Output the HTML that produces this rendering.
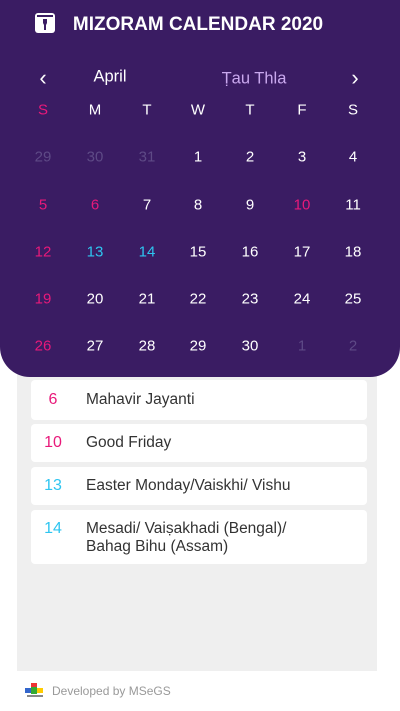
<!DOCTYPE html>
<html><head><meta charset="utf-8"><style>
*{margin:0;padding:0;box-sizing:border-box}
body{width:400px;height:711px;background:#fff;font-family:"Liberation Sans",sans-serif;position:relative;overflow:hidden}
.gray{position:absolute;left:17px;top:340px;width:360px;height:331px;background:#efefef}
.top{position:absolute;left:0;top:0;width:400px;height:377px;background:#3a1c63;border-radius:0 0 30px 30px}
.t{position:absolute;color:#fff;transform:translate(-50%,-50%);white-space:nowrap}
.c{font-size:15px}
.p{color:#e8197a}.b{color:#2ec5f0}.d{color:#5e4a86}
.card{position:absolute;left:31px;width:336px;background:#fff;border-radius:4px;font-size:15.5px;color:#333}
.card .n{position:absolute;left:22px;top:50%;transform:translate(-50%,-50%);font-size:16px}
.card .x{position:absolute;left:55px}
</style></head><body>
<div class="gray"></div>
<div class="top">
<svg style="position:absolute;left:34px;top:12px" width="22" height="22" viewBox="0 0 22 22"><rect x="1" y="1" width="20" height="20" rx="3" fill="#fff"/><rect x="3" y="3" width="16" height="2" fill="#3a1c63"/><path d="M9 7h4v4l-1 2v5h-2v-5l-1-2z" fill="#3a1c63"/></svg>
<div class="t" style="left:198px;top:25px;font-size:19px;font-weight:bold">MIZORAM CALENDAR 2020</div>
<div class="t" style="left:43px;top:78px;font-size:22px">‹</div>
<div class="t" style="left:110px;top:77px;font-size:16.5px">April</div>
<div class="t" style="left:254px;top:79px;font-size:16.5px;color:#c9a8ee">Ṭau Thla</div>
<div class="t" style="left:355px;top:78px;font-size:22px">›</div>
</div>
<div id="g"></div>
<div class="card" style="top:380px;height:40px"><span class="n p">6</span><span class="x" style="top:11px">Mahavir Jayanti</span></div>
<div class="card" style="top:424px;height:38px"><span class="n p">10</span><span class="x" style="top:10px">Good Friday</span></div>
<div class="card" style="top:467px;height:38px"><span class="n b">13</span><span class="x" style="top:10px">Easter Monday/Vaiskhi/ Vishu</span></div>
<div class="card" style="top:510px;height:54px"><span class="n b" style="top:19px">14</span><span class="x" style="top:10px;line-height:18px">Mesadi/ Vaiṣakhadi (Bengal)/<br>Bahag Bihu (Assam)</span></div>
<svg style="position:absolute;left:25px;top:683px" width="20" height="16" viewBox="0 0 20 16"><rect x="6" y="0" width="6" height="4" fill="#e33"/><rect x="0" y="5" width="6" height="5" fill="#36c"/><rect x="12" y="5" width="6" height="5" fill="#fc0"/><rect x="6" y="4" width="6" height="7" fill="#3a3"/><rect x="2" y="12" width="16" height="2" fill="#888"/></svg>
<div style="position:absolute;left:52px;top:684px;font-size:12px;color:#999">Developed by MSeGS</div>
<script>
var xs=[43,95,147,198,250,302,353],h=["S","M","T","W","T","F","S"],s="";
h.forEach(function(v,i){s+='<div class="t c'+(i==0?' p':'')+'" style="left:'+xs[i]+'px;top:110px">'+v+'</div>'});
var rows=[[29,30,31,1,2,3,4],[5,6,7,8,9,10,11],[12,13,14,15,16,17,18],[19,20,21,22,23,24,25],[26,27,28,29,30,1,2]],ys=[157,205,252,299,346];
rows.forEach(function(r,ri){r.forEach(function(v,i){var c="";if((ri==0&&i<3)||(ri==4&&i>4))c=" d";else if(i==0||(ri==1&&(v==6||v==10)))c=" p";else if(ri==2&&(v==13||v==14))c=" b";s+='<div class="t c'+c+'" style="left:'+xs[i]+'px;top:'+ys[ri]+'px">'+v+'</div>'})});
document.getElementById("g").innerHTML=s;
</script>
</body></html>
